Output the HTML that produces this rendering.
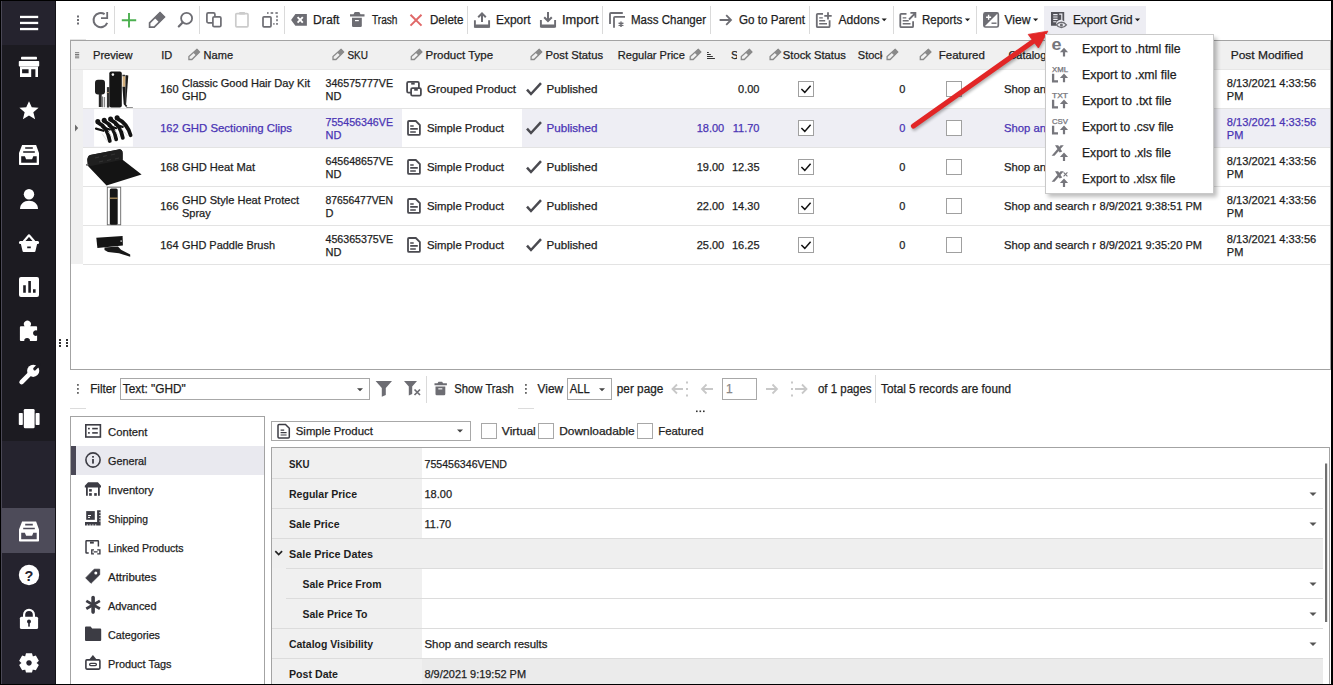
<!DOCTYPE html>
<html><head><meta charset="utf-8"><title>Store Manager</title>
<style>html,body{margin:0;padding:0;width:1333px;height:685px;overflow:hidden;background:#000}</style>
</head><body>
<svg width="1333" height="685" viewBox="0 0 1333 685" font-family="Liberation Sans, sans-serif" style="position:absolute;left:0;top:0"><rect x="0" y="0" width="1333" height="685" fill="#000" />
<rect x="1" y="1" width="1" height="683" fill="#4a4856" />
<rect x="2" y="1" width="54" height="683" fill="#1c1b21" />
<rect x="2" y="1" width="54" height="44" fill="#25232e" />
<rect x="2" y="441" width="54" height="243" fill="#25232e" />
<rect x="2" y="508" width="54" height="45" fill="#4d4b59" />
<rect x="55" y="1" width="1" height="683" fill="#141318" />
<g fill="#fff">
  <rect x="20" y="15.8" width="18.2" height="2.3"/>
  <rect x="20" y="21.8" width="18.2" height="2.3"/>
  <rect x="20" y="27.9" width="18.2" height="2.3"/>
  <rect x="21" y="56.8" width="16" height="2.8" rx="0.8"/>
  <path d="M19.6 61h18.8a0.8 0.8 0 0 1 0.8 0.8v4a0.8 0.8 0 0 1 -0.8 0.8h-18.8a0.8 0.8 0 0 1 -0.8 -0.8v-4a0.8 0.8 0 0 1 0.8 -0.8z"/>
  <path fill-rule="evenodd" d="M20 66.6h18v10.4h-2.6v-7.7h-4.2v7.7h-11.2zM22.1 69.3v3.9h6.5v-3.9z"/>
  <path d="M29 101.2l2.75 6.1 6.85 0.55-5.25 4.45 1.75 6.85-6.1-3.75-6.1 3.75 1.75-6.85-5.25-4.45 6.85-0.55z"/>
  <circle cx="29" cy="194.3" r="5.2"/>
  <path d="M20 209c0-5 4-8.2 9-8.2s9 3.2 9 8.2z"/>
  <path fill-rule="evenodd" d="M21 277h16a2 2 0 0 1 2 2v16a2 2 0 0 1 -2 2h-16a2 2 0 0 1 -2 -2v-16a2 2 0 0 1 2 -2zM23.2 285.2v7.6h2.6v-7.6zM28.3 281v11.8h2.6v-11.8zM33 289.2v3.6h2.6v-3.6z"/>
  <path fill-rule="evenodd" d="M24.6 326.2a3.5 3.5 0 1 1 5.6 0h5.9a1 1 0 0 1 1 1v3.4a2.8 2.8 0 1 0 0 5v4.4a1 1 0 0 1 -1 1h-6.3a2.9 2.2 0 1 0 -5.4 0h-3.5a1 1 0 0 1 -1 -1v-12.8a1 1 0 0 1 1 -1z"/>
  <rect x="23.8" y="409" width="10.8" height="19.2" rx="1.3"/>
  <rect x="18.8" y="413" width="4" height="12" rx="0.8"/>
  <rect x="35.6" y="413" width="4" height="12" rx="0.8"/>
  <circle cx="29" cy="575" r="10.2"/>
  <rect x="19.9" y="616.7" width="18.2" height="12.3" rx="1.6"/>
  <path fill-rule="evenodd" d="M25.10 656.61 L26.00 653.26 L32.00 653.26 L32.90 656.61 L32.50 656.38 L35.85 655.48 L38.85 660.68 L36.40 663.13 L36.40 662.67 L38.85 665.12 L35.85 670.32 L32.50 669.42 L32.90 669.19 L32.00 672.54 L26.00 672.54 L25.10 669.19 L25.50 669.42 L22.15 670.32 L19.15 665.12 L21.60 662.67 L21.60 663.13 L19.15 660.68 L22.15 655.48 L25.50 656.38ZM29 660.15a2.75 2.75 0 1 0 0.01 0z"/>
 </g>
 <path fill="#fff" fill-rule="evenodd" d="M22.1 145L36.1 145L39 153L39 164.2Q39 165 38.2 165L19.8 165Q19 165 19 164.2L19 153Z M25.2 147.2h7.6v1.6h-7.6z M23.2 151.2h11.6v1.5h-11.6z M21.2 156.2h3.7l1.2 3h6l1.2-3h3.4v6.5h-15.5z"/>
 <path fill="#fff" fill-rule="evenodd" d="M22.1 521.6L36.1 521.6L39 529.6L39 540.8Q39 541.6 38.2 541.6L19.8 541.6Q19 541.6 19 540.8L19 529.6Z M25.2 523.8h7.6v1.6h-7.6z M23.2 527.8h11.6v1.5h-11.6z M21.2 532.8h3.7l1.2 3h6l1.2-3h3.4v6.5h-15.5z"/>
 <path d="M23.6 241.5l5.4-6.2 5.4 6.2" fill="none" stroke="#fff" stroke-width="2.1" stroke-linejoin="round"/>
 <path fill="#fff" fill-rule="evenodd" d="M20.4 241h17.2a1.2 1.2 0 0 1 0 3h-0.5l-1.7 7.2a1 1 0 0 1 -1 0.8h-10.8a1 1 0 0 1 -1 -0.8l-1.7-7.2h-0.5a1.2 1.2 0 0 1 0 -3zM27.2 246.6v1.6h3.6v-1.6z"/>
 <circle cx="33.2" cy="370.8" r="6.1" fill="#fff"/>
 <path d="M21.6 382.1L30 373.7" stroke="#fff" stroke-width="4.6" stroke-linecap="round"/>
 <path d="M39 364.6L34.7 368.9" stroke="#1c1b21" stroke-width="3" stroke-linecap="round"/>
 <text x="29" y="580.6" text-anchor="middle" font-family="Liberation Sans" font-weight="bold" font-size="14.5" fill="#25232e">?</text>
 <path d="M24.1 617v-2.2a4.9 4.9 0 0 1 9.8 0v2.2" fill="none" stroke="#fff" stroke-width="2.2"/>
 <circle cx="29" cy="621.6" r="2" fill="#25232e"/>
 <rect x="28.2" y="622" width="1.6" height="4.6" fill="#25232e"/>
<rect x="56" y="1" width="1275" height="683" fill="#fff" />
<rect x="114" y="6" width="1" height="28" fill="#dadada"/>
<rect x="199" y="6" width="1" height="28" fill="#dadada"/>
<rect x="284" y="6" width="1" height="28" fill="#dadada"/>
<rect x="467" y="6" width="1" height="28" fill="#dadada"/>
<rect x="602" y="6" width="1" height="28" fill="#dadada"/>
<rect x="710" y="6" width="1" height="28" fill="#dadada"/>
<rect x="809" y="6" width="1" height="28" fill="#dadada"/>
<rect x="893" y="6" width="1" height="28" fill="#dadada"/>
<rect x="976" y="6" width="1" height="28" fill="#dadada"/>
<rect x="1044" y="6" width="102" height="28" fill="#ededf3" />
<text x="313" y="23.9" font-size="12" fill="#1e1e1e" stroke="#1e1e1e" stroke-width="0.25" textLength="26.5" lengthAdjust="spacingAndGlyphs" >Draft</text>
<text x="372" y="23.9" font-size="12" fill="#1e1e1e" stroke="#1e1e1e" stroke-width="0.25" textLength="25.5" lengthAdjust="spacingAndGlyphs" >Trash</text>
<text x="430" y="23.9" font-size="12" fill="#1e1e1e" stroke="#1e1e1e" stroke-width="0.25" textLength="33.5" lengthAdjust="spacingAndGlyphs" >Delete</text>
<text x="496" y="23.9" font-size="12" fill="#1e1e1e" stroke="#1e1e1e" stroke-width="0.25" textLength="34.5" lengthAdjust="spacingAndGlyphs" >Export</text>
<text x="562" y="23.9" font-size="12" fill="#1e1e1e" stroke="#1e1e1e" stroke-width="0.25" textLength="36.5" lengthAdjust="spacingAndGlyphs" >Import</text>
<text x="631" y="23.9" font-size="12" fill="#1e1e1e" stroke="#1e1e1e" stroke-width="0.25" textLength="75" lengthAdjust="spacingAndGlyphs" >Mass Changer</text>
<text x="739" y="23.9" font-size="12" fill="#1e1e1e" stroke="#1e1e1e" stroke-width="0.25" textLength="66" lengthAdjust="spacingAndGlyphs" >Go to Parent</text>
<text x="838.5" y="23.9" font-size="12" fill="#1e1e1e" stroke="#1e1e1e" stroke-width="0.25" textLength="41" lengthAdjust="spacingAndGlyphs" >Addons</text>
<text x="922" y="23.9" font-size="12" fill="#1e1e1e" stroke="#1e1e1e" stroke-width="0.25" textLength="40.3" lengthAdjust="spacingAndGlyphs" >Reports</text>
<text x="1004.5" y="23.9" font-size="12" fill="#1e1e1e" stroke="#1e1e1e" stroke-width="0.25" textLength="26" lengthAdjust="spacingAndGlyphs" >View</text>
<text x="1073" y="23.9" font-size="12" fill="#1e1e1e" stroke="#1e1e1e" stroke-width="0.25" textLength="59.6" lengthAdjust="spacingAndGlyphs" >Export Grid</text>
<path d="M881.6 18.4h5.2l-2.6 2.8z" fill="#1e1e1e"/>
<path d="M964.9 18.4h5.2l-2.6 2.8z" fill="#1e1e1e"/>
<path d="M1033.0 18.4h5.2l-2.6 2.8z" fill="#1e1e1e"/>
<path d="M1134.9 18.4h5.2l-2.6 2.8z" fill="#1e1e1e"/>

<g fill="#6d6d73">
 <rect x="77" y="15.5" width="2" height="2"/><rect x="77" y="19" width="2" height="2"/><rect x="77" y="22.5" width="2" height="2"/>
</g>
<path d="M107.2 22.8A7.1 7.1 0 1 1 104.6 14.2" fill="none" stroke="#6d6d73" stroke-width="2"/>
<path d="M101 17.2h5.3v-5.2h1.8v7h-7.1z" fill="#6d6d73"/>
<path d="M129 13v14.5M121.8 20.2h14.4" stroke="#4cb050" stroke-width="1.9" fill="none"/>
<path d="M160 12.6L164.4 17L154.2 27.2H149.6V22.8Z" fill="none" stroke="#6d6d73" stroke-width="1.7" stroke-linejoin="miter"/>
<path d="M160 12.1L164.8 16.9L159.25 22.45L154.45 17.65Z" fill="#6d6d73"/>
<circle cx="186.6" cy="18.3" r="5.5" fill="none" stroke="#6d6d73" stroke-width="1.8"/>
<path d="M182.6 22.4L178.8 26.4" stroke="#6d6d73" stroke-width="2.2" stroke-linecap="round"/>
<rect x="206.9" y="12.9" width="8" height="9.9" rx="1.3" fill="none" stroke="#6d6d73" stroke-width="1.7"/>
<rect x="212.9" y="16.8" width="8" height="9.9" rx="1.3" fill="#fff" stroke="#6d6d73" stroke-width="1.7"/>
<rect x="235.8" y="13.6" width="12.2" height="13.2" rx="1" fill="none" stroke="#cbcbcb" stroke-width="1.7"/>
<rect x="239.3" y="12" width="5.6" height="2.6" fill="#cbcbcb"/>
<rect x="263" y="16.8" width="8" height="10" rx="1" fill="none" stroke="#6d6d73" stroke-width="1.7"/>
<g fill="#6d6d73"><rect x="267" y="12.2" width="1.6" height="1.6"/><rect x="270.6" y="12.2" width="2.6" height="1.6"/><rect x="275.4" y="12.2" width="2.4" height="1.6"/><rect x="276.2" y="15.6" width="1.6" height="2"/><rect x="276.2" y="19.2" width="1.6" height="2"/><rect x="276.2" y="23" width="1.6" height="1.8"/><rect x="273.3" y="23" width="1.2" height="1.8"/></g>
<path d="M295.4 14h11.5v11.8h-11.5l-4.3-5.9z" fill="#6d6d73"/>
<path d="M297.6 17.2l5.2 5.4M302.8 17.2l-5.2 5.4" stroke="#fff" stroke-width="1.9"/>
<path d="M353.5 14.3l1.2-2.2h4.6l1.2 2.2h4v2.3h-14.5v-2.3z" fill="#6d6d73"/>
<path d="M352 17.8h9.8v7.9a1.2 1.2 0 0 1 -1.2 1.2h-7.4a1.2 1.2 0 0 1 -1.2 -1.2z" fill="#6d6d73"/>
<rect x="355" y="20" width="3.8" height="1.2" fill="#fff"/>
<path d="M410.5 14.8l11 10.8M421.5 14.8l-11 10.8" stroke="#e06868" stroke-width="2"/>
<path d="M474.9 20.3v6.6h14.2v-6.6" fill="none" stroke="#6d6d73" stroke-width="1.9"/>
<rect x="474.9" y="24.6" width="14.2" height="3.2" rx="0.8" fill="#6d6d73"/>
<path d="M482 22v-8.4M478.2 17.2l3.8-3.8 3.8 3.8" fill="none" stroke="#6d6d73" stroke-width="2"/>
<path d="M540.9 20v6.6h14.2v-6.6" fill="none" stroke="#6d6d73" stroke-width="1.9"/>
<rect x="540.9" y="24.6" width="14.2" height="3.2" rx="0.8" fill="#6d6d73"/>
<path d="M548 12v8.6M544.2 17.2l3.8 3.8 3.8-3.8" fill="none" stroke="#6d6d73" stroke-width="2"/>
<path d="M610 24v-10a1 1 0 0 1 1 -1h11.8" fill="none" stroke="#6d6d73" stroke-width="1.8"/>
<path d="M614 27.8v-10a1 1 0 0 1 1 -1h10" fill="none" stroke="#6d6d73" stroke-width="1.8"/>
<path d="M621 21.4v5.6M618.6 22.8l4.8 2.8M618.6 25.6l4.8-2.8" stroke="#6d6d73" stroke-width="1.5"/>
<path d="M719.6 20h10.2M726.2 15.2l4.8 4.8-4.8 4.8" fill="none" stroke="#6d6d73" stroke-width="1.8"/>
<path d="M823 13.8h-5.2a1 1 0 0 0 -1 1v11.4a1 1 0 0 0 1 1h10.8a1 1 0 0 0 1 -1v-6" fill="none" stroke="#6d6d73" stroke-width="1.8"/>
<path d="M819.2 17.9h3.6M819.2 20.8h6M819.2 23.7h7.8" stroke="#6d6d73" stroke-width="1.4"/>
<path d="M828 12.2v7.4M824.3 15.9h7.4" stroke="#6d6d73" stroke-width="1.8"/>
<path d="M906.5 13.8h-5.2a1 1 0 0 0 -1 1v11.4a1 1 0 0 0 1 1h10.8a1 1 0 0 0 1 -1v-5" fill="none" stroke="#6d6d73" stroke-width="1.8"/>
<path d="M902.7 17.9h3.6M902.7 20.8h6M902.7 23.7h7.8" stroke="#6d6d73" stroke-width="1.4"/>
<path d="M909 19.5l5.6-5.6M910.4 12.8h5v5" fill="none" stroke="#6d6d73" stroke-width="1.8"/>
<rect x="983.9" y="12.8" width="14.4" height="14.2" rx="1.6" fill="none" stroke="#6d6d73" stroke-width="1.7"/>
<path d="M984 12.8h14.3L984 27z" fill="#6d6d73"/>
<path d="M988.6 14.8v5M986.1 17.3h5" stroke="#fff" stroke-width="1.4"/>
<path d="M991.5 23.2h5" stroke="#6d6d73" stroke-width="1.4"/>
<path d="M1051 12h13.2v9.5a4.6 4.6 0 0 0 -7.9 4.3h-5.3z" fill="#55555c"/>
<path d="M1053.2 14.6h4.4M1053.2 17h4.4M1053.2 19.4h4.4M1053.2 21.8h3.2" stroke="#ededf3" stroke-width="1.1"/>
<path d="M1059.2 14.2h2.6v6" fill="none" stroke="#ededf3" stroke-width="1.2"/>
<path d="M1056.4 24.9c2.7-3.5 7.3-3.5 10 0c-2.7 3.5-7.3 3.5-10 0z" fill="none" stroke="#6d6d73" stroke-width="1.4"/>
<circle cx="1061.4" cy="24.9" r="1.5" fill="#6d6d73"/>

<rect x="70" y="39" width="16" height="1" fill="#e4e4e4"/>
<rect x="70" y="40" width="1261" height="330" fill="#a3a3a3" />
<rect x="71" y="41" width="1259" height="328" fill="#fff" />
<rect x="71" y="41" width="1259" height="28" fill="#f0f0f0" />
<rect x="71" y="69" width="1259" height="1" fill="#e6e6e6"/>
<rect x="71" y="70" width="12" height="194" fill="#f0f0f0" />
<rect x="83" y="108" width="1247" height="1" fill="#e3e3e3"/>
<text x="178.5" y="92.8" font-size="11" fill="#1e1e1e" stroke="#1e1e1e" stroke-width="0.25" text-anchor="end" >160</text>
<text x="182" y="86.8" font-size="11" fill="#1e1e1e" stroke="#1e1e1e" stroke-width="0.25" textLength="128" lengthAdjust="spacingAndGlyphs" >Classic Good Hair Day Kit</text>
<text x="182" y="99.7" font-size="11" fill="#1e1e1e" stroke="#1e1e1e" stroke-width="0.25" >GHD</text>
<text x="325.5" y="86.8" font-size="11" fill="#1e1e1e" stroke="#1e1e1e" stroke-width="0.25" textLength="67.5" lengthAdjust="spacingAndGlyphs" >346575777VE</text>
<text x="325.5" y="99.7" font-size="11" fill="#1e1e1e" stroke="#1e1e1e" stroke-width="0.25" >ND</text>
<text x="427" y="92.8" font-size="11" fill="#1e1e1e" stroke="#1e1e1e" stroke-width="0.25" textLength="89" lengthAdjust="spacingAndGlyphs" >Grouped Product</text>
<text x="546.5" y="92.8" font-size="11" fill="#1e1e1e" stroke="#1e1e1e" stroke-width="0.25" textLength="51" lengthAdjust="spacingAndGlyphs" >Published</text>
<text x="759.5" y="92.8" font-size="11" fill="#1e1e1e" stroke="#1e1e1e" stroke-width="0.25" text-anchor="end" >0.00</text>
<text x="905.3" y="92.8" font-size="11" fill="#1e1e1e" stroke="#1e1e1e" stroke-width="0.25" text-anchor="end" >0</text>
<text x="1004" y="92.8" font-size="11" fill="#1e1e1e" stroke="#1e1e1e" stroke-width="0.25" textLength="92" lengthAdjust="spacingAndGlyphs" clip-path="url(#clipcat)">Shop and search r</text>
<text x="1226.8" y="86.8" font-size="11" fill="#1e1e1e" stroke="#1e1e1e" stroke-width="0.25" textLength="89.5" lengthAdjust="spacingAndGlyphs" >8/13/2021 4:33:56</text>
<text x="1226.8" y="99.7" font-size="11" fill="#1e1e1e" stroke="#1e1e1e" stroke-width="0.25" >PM</text>
<rect x="798.5" y="81.5" width="15" height="15" fill="#fff" stroke="#a0a0a0"/>
<path d="M801.4 89l3.4 3.4 5.8-6.6" fill="none" stroke="#111" stroke-width="1.5"/>
<rect x="946.5" y="81.5" width="15" height="15" fill="#fff" stroke="#a0a0a0"/>
<rect x="407.1" y="81.9" width="11.8" height="10.8" rx="1.4" fill="none" stroke="#4a4a50" stroke-width="1.8"/>
<rect x="411.2" y="82.5" width="3.5" height="2.1" fill="#4a4a50"/>
<rect x="411.1" y="88.2" width="9.8" height="7.5" rx="1.4" fill="#fff" stroke="#4a4a50" stroke-width="1.8"/>
<rect x="414.2" y="88.6" width="3.6" height="2.1" fill="#4a4a50"/>
<path d="M527 89.6l4 4.4 10-10.8" fill="none" stroke="#4a4a50" stroke-width="2.5"/>
<rect x="83" y="109" width="1247" height="38" fill="#eeeef4" />
<rect x="402" y="109" width="120" height="38" fill="#fff" />
<path d="M75 124.5l3.2 3.5-3.2 3.5z" fill="#6a6a6a"/>
<rect x="83" y="147" width="1247" height="1" fill="#e3e3e3"/>
<text x="178.5" y="131.8" font-size="11" fill="#4a34b4" stroke="#4a34b4" stroke-width="0.25" text-anchor="end" >162</text>
<text x="182" y="131.8" font-size="11" fill="#4a34b4" stroke="#4a34b4" stroke-width="0.25" textLength="110" lengthAdjust="spacingAndGlyphs" >GHD Sectioning Clips</text>
<text x="325.5" y="125.8" font-size="11" fill="#4a34b4" stroke="#4a34b4" stroke-width="0.25" textLength="67.5" lengthAdjust="spacingAndGlyphs" >755456346VE</text>
<text x="325.5" y="138.7" font-size="11" fill="#4a34b4" stroke="#4a34b4" stroke-width="0.25" >ND</text>
<text x="427" y="131.8" font-size="11" fill="#1e1e1e" stroke="#1e1e1e" stroke-width="0.25" textLength="77" lengthAdjust="spacingAndGlyphs" >Simple Product</text>
<text x="546.5" y="131.8" font-size="11" fill="#4a34b4" stroke="#4a34b4" stroke-width="0.25" textLength="51" lengthAdjust="spacingAndGlyphs" >Published</text>
<text x="724.2" y="131.8" font-size="11" fill="#4a34b4" stroke="#4a34b4" stroke-width="0.25" text-anchor="end" >18.00</text>
<text x="759.5" y="131.8" font-size="11" fill="#4a34b4" stroke="#4a34b4" stroke-width="0.25" text-anchor="end" >11.70</text>
<text x="905.3" y="131.8" font-size="11" fill="#4a34b4" stroke="#4a34b4" stroke-width="0.25" text-anchor="end" >0</text>
<text x="1004" y="131.8" font-size="11" fill="#4a34b4" stroke="#4a34b4" stroke-width="0.25" textLength="92" lengthAdjust="spacingAndGlyphs" clip-path="url(#clipcat)">Shop and search r</text>
<text x="1226.8" y="125.8" font-size="11" fill="#4a34b4" stroke="#4a34b4" stroke-width="0.25" textLength="89.5" lengthAdjust="spacingAndGlyphs" >8/13/2021 4:33:56</text>
<text x="1226.8" y="138.7" font-size="11" fill="#4a34b4" stroke="#4a34b4" stroke-width="0.25" >PM</text>
<rect x="798.5" y="120.5" width="15" height="15" fill="#fff" stroke="#a0a0a0"/>
<path d="M801.4 128l3.4 3.4 5.8-6.6" fill="none" stroke="#111" stroke-width="1.5"/>
<rect x="946.5" y="120.5" width="15" height="15" fill="#fff" stroke="#a0a0a0"/>
<path d="M408 122a1 1 0 0 1 1-1h6.8l4.1 4.1v8.8a1 1 0 0 1 -1 1h-9.9a1 1 0 0 1 -1 -1z" fill="none" stroke="#4a4a50" stroke-width="1.8"/>
<path d="M410.2 126h3.5M410.2 128.9h7.6M410.2 132h5.6" stroke="#4a4a50" stroke-width="1.6"/>
<path d="M527 128.6l4 4.4 10-10.8" fill="none" stroke="#4a4a50" stroke-width="2.5"/>
<rect x="83" y="186" width="1247" height="1" fill="#e3e3e3"/>
<text x="178.5" y="170.8" font-size="11" fill="#1e1e1e" stroke="#1e1e1e" stroke-width="0.25" text-anchor="end" >168</text>
<text x="182" y="170.8" font-size="11" fill="#1e1e1e" stroke="#1e1e1e" stroke-width="0.25" textLength="73" lengthAdjust="spacingAndGlyphs" >GHD Heat Mat</text>
<text x="325.5" y="164.8" font-size="11" fill="#1e1e1e" stroke="#1e1e1e" stroke-width="0.25" textLength="67.5" lengthAdjust="spacingAndGlyphs" >645648657VE</text>
<text x="325.5" y="177.7" font-size="11" fill="#1e1e1e" stroke="#1e1e1e" stroke-width="0.25" >ND</text>
<text x="427" y="170.8" font-size="11" fill="#1e1e1e" stroke="#1e1e1e" stroke-width="0.25" textLength="77" lengthAdjust="spacingAndGlyphs" >Simple Product</text>
<text x="546.5" y="170.8" font-size="11" fill="#1e1e1e" stroke="#1e1e1e" stroke-width="0.25" textLength="51" lengthAdjust="spacingAndGlyphs" >Published</text>
<text x="724.2" y="170.8" font-size="11" fill="#1e1e1e" stroke="#1e1e1e" stroke-width="0.25" text-anchor="end" >19.00</text>
<text x="759.5" y="170.8" font-size="11" fill="#1e1e1e" stroke="#1e1e1e" stroke-width="0.25" text-anchor="end" >12.35</text>
<text x="905.3" y="170.8" font-size="11" fill="#1e1e1e" stroke="#1e1e1e" stroke-width="0.25" text-anchor="end" >0</text>
<text x="1004" y="170.8" font-size="11" fill="#1e1e1e" stroke="#1e1e1e" stroke-width="0.25" textLength="92" lengthAdjust="spacingAndGlyphs" clip-path="url(#clipcat)">Shop and search r</text>
<text x="1226.8" y="164.8" font-size="11" fill="#1e1e1e" stroke="#1e1e1e" stroke-width="0.25" textLength="89.5" lengthAdjust="spacingAndGlyphs" >8/13/2021 4:33:56</text>
<text x="1226.8" y="177.7" font-size="11" fill="#1e1e1e" stroke="#1e1e1e" stroke-width="0.25" >PM</text>
<rect x="798.5" y="159.5" width="15" height="15" fill="#fff" stroke="#a0a0a0"/>
<path d="M801.4 167l3.4 3.4 5.8-6.6" fill="none" stroke="#111" stroke-width="1.5"/>
<rect x="946.5" y="159.5" width="15" height="15" fill="#fff" stroke="#a0a0a0"/>
<path d="M408 161a1 1 0 0 1 1-1h6.8l4.1 4.1v8.8a1 1 0 0 1 -1 1h-9.9a1 1 0 0 1 -1 -1z" fill="none" stroke="#4a4a50" stroke-width="1.8"/>
<path d="M410.2 165h3.5M410.2 167.9h7.6M410.2 171h5.6" stroke="#4a4a50" stroke-width="1.6"/>
<path d="M527 167.6l4 4.4 10-10.8" fill="none" stroke="#4a4a50" stroke-width="2.5"/>
<rect x="83" y="225" width="1247" height="1" fill="#e3e3e3"/>
<text x="178.5" y="209.8" font-size="11" fill="#1e1e1e" stroke="#1e1e1e" stroke-width="0.25" text-anchor="end" >166</text>
<text x="182" y="203.8" font-size="11" fill="#1e1e1e" stroke="#1e1e1e" stroke-width="0.25" textLength="117" lengthAdjust="spacingAndGlyphs" >GHD Style Heat Protect</text>
<text x="182" y="216.7" font-size="11" fill="#1e1e1e" stroke="#1e1e1e" stroke-width="0.25" >Spray</text>
<text x="325.5" y="203.8" font-size="11" fill="#1e1e1e" stroke="#1e1e1e" stroke-width="0.25" textLength="67.5" lengthAdjust="spacingAndGlyphs" >87656477VEN</text>
<text x="325.5" y="216.7" font-size="11" fill="#1e1e1e" stroke="#1e1e1e" stroke-width="0.25" >D</text>
<text x="427" y="209.8" font-size="11" fill="#1e1e1e" stroke="#1e1e1e" stroke-width="0.25" textLength="77" lengthAdjust="spacingAndGlyphs" >Simple Product</text>
<text x="546.5" y="209.8" font-size="11" fill="#1e1e1e" stroke="#1e1e1e" stroke-width="0.25" textLength="51" lengthAdjust="spacingAndGlyphs" >Published</text>
<text x="724.2" y="209.8" font-size="11" fill="#1e1e1e" stroke="#1e1e1e" stroke-width="0.25" text-anchor="end" >22.00</text>
<text x="759.5" y="209.8" font-size="11" fill="#1e1e1e" stroke="#1e1e1e" stroke-width="0.25" text-anchor="end" >14.30</text>
<text x="905.3" y="209.8" font-size="11" fill="#1e1e1e" stroke="#1e1e1e" stroke-width="0.25" text-anchor="end" >0</text>
<text x="1004" y="209.8" font-size="11" fill="#1e1e1e" stroke="#1e1e1e" stroke-width="0.25" textLength="92" lengthAdjust="spacingAndGlyphs" clip-path="url(#clipcat)">Shop and search r</text>
<text x="1099.5" y="209.8" font-size="11" fill="#1e1e1e" stroke="#1e1e1e" stroke-width="0.25" textLength="102.5" lengthAdjust="spacingAndGlyphs" >8/9/2021 9:38:51 PM</text>
<text x="1226.8" y="203.8" font-size="11" fill="#1e1e1e" stroke="#1e1e1e" stroke-width="0.25" textLength="89.5" lengthAdjust="spacingAndGlyphs" >8/13/2021 4:33:56</text>
<text x="1226.8" y="216.7" font-size="11" fill="#1e1e1e" stroke="#1e1e1e" stroke-width="0.25" >PM</text>
<rect x="798.5" y="198.5" width="15" height="15" fill="#fff" stroke="#a0a0a0"/>
<path d="M801.4 206l3.4 3.4 5.8-6.6" fill="none" stroke="#111" stroke-width="1.5"/>
<rect x="946.5" y="198.5" width="15" height="15" fill="#fff" stroke="#a0a0a0"/>
<path d="M408 200a1 1 0 0 1 1-1h6.8l4.1 4.1v8.8a1 1 0 0 1 -1 1h-9.9a1 1 0 0 1 -1 -1z" fill="none" stroke="#4a4a50" stroke-width="1.8"/>
<path d="M410.2 204h3.5M410.2 206.9h7.6M410.2 210h5.6" stroke="#4a4a50" stroke-width="1.6"/>
<path d="M527 206.6l4 4.4 10-10.8" fill="none" stroke="#4a4a50" stroke-width="2.5"/>
<rect x="83" y="264" width="1247" height="1" fill="#e3e3e3"/>
<text x="178.5" y="248.8" font-size="11" fill="#1e1e1e" stroke="#1e1e1e" stroke-width="0.25" text-anchor="end" >164</text>
<text x="182" y="248.8" font-size="11" fill="#1e1e1e" stroke="#1e1e1e" stroke-width="0.25" textLength="93" lengthAdjust="spacingAndGlyphs" >GHD Paddle Brush</text>
<text x="325.5" y="242.8" font-size="11" fill="#1e1e1e" stroke="#1e1e1e" stroke-width="0.25" textLength="67.5" lengthAdjust="spacingAndGlyphs" >456365375VE</text>
<text x="325.5" y="255.7" font-size="11" fill="#1e1e1e" stroke="#1e1e1e" stroke-width="0.25" >ND</text>
<text x="427" y="248.8" font-size="11" fill="#1e1e1e" stroke="#1e1e1e" stroke-width="0.25" textLength="77" lengthAdjust="spacingAndGlyphs" >Simple Product</text>
<text x="546.5" y="248.8" font-size="11" fill="#1e1e1e" stroke="#1e1e1e" stroke-width="0.25" textLength="51" lengthAdjust="spacingAndGlyphs" >Published</text>
<text x="724.2" y="248.8" font-size="11" fill="#1e1e1e" stroke="#1e1e1e" stroke-width="0.25" text-anchor="end" >25.00</text>
<text x="759.5" y="248.8" font-size="11" fill="#1e1e1e" stroke="#1e1e1e" stroke-width="0.25" text-anchor="end" >16.25</text>
<text x="905.3" y="248.8" font-size="11" fill="#1e1e1e" stroke="#1e1e1e" stroke-width="0.25" text-anchor="end" >0</text>
<text x="1004" y="248.8" font-size="11" fill="#1e1e1e" stroke="#1e1e1e" stroke-width="0.25" textLength="92" lengthAdjust="spacingAndGlyphs" clip-path="url(#clipcat)">Shop and search r</text>
<text x="1099.5" y="248.8" font-size="11" fill="#1e1e1e" stroke="#1e1e1e" stroke-width="0.25" textLength="102.5" lengthAdjust="spacingAndGlyphs" >8/9/2021 9:35:20 PM</text>
<text x="1226.8" y="242.8" font-size="11" fill="#1e1e1e" stroke="#1e1e1e" stroke-width="0.25" textLength="89.5" lengthAdjust="spacingAndGlyphs" >8/13/2021 4:33:56</text>
<text x="1226.8" y="255.7" font-size="11" fill="#1e1e1e" stroke="#1e1e1e" stroke-width="0.25" >PM</text>
<rect x="798.5" y="237.5" width="15" height="15" fill="#fff" stroke="#a0a0a0"/>
<path d="M801.4 245l3.4 3.4 5.8-6.6" fill="none" stroke="#111" stroke-width="1.5"/>
<rect x="946.5" y="237.5" width="15" height="15" fill="#fff" stroke="#a0a0a0"/>
<path d="M408 239a1 1 0 0 1 1-1h6.8l4.1 4.1v8.8a1 1 0 0 1 -1 1h-9.9a1 1 0 0 1 -1 -1z" fill="none" stroke="#4a4a50" stroke-width="1.8"/>
<path d="M410.2 243h3.5M410.2 245.9h7.6M410.2 249h5.6" stroke="#4a4a50" stroke-width="1.6"/>
<path d="M527 245.6l4 4.4 10-10.8" fill="none" stroke="#4a4a50" stroke-width="2.5"/>
<defs><clipPath id="clipcat"><rect x="1000" y="60" width="96" height="220"/></clipPath><clipPath id="clipS"><rect x="725" y="41" width="12" height="28"/></clipPath><clipPath id="clipStock"><rect x="850" y="41" width="32.3" height="28"/></clipPath></defs>
<g fill="#777"><rect x="75" y="52.2" width="4.2" height="1"/><rect x="75" y="54" width="4.2" height="1"/><rect x="75" y="55.6" width="4.2" height="1"/><rect x="75" y="57.3" width="4.2" height="1"/></g>
<text x="93" y="58.8" font-size="11" fill="#1e1e1e" stroke="#1e1e1e" stroke-width="0.25" textLength="39.5" lengthAdjust="spacingAndGlyphs" >Preview</text>
<text x="161.2" y="58.8" font-size="11" fill="#1e1e1e" stroke="#1e1e1e" stroke-width="0.25" >ID</text>
<text x="203.6" y="58.8" font-size="11" fill="#1e1e1e" stroke="#1e1e1e" stroke-width="0.25" textLength="29.5" lengthAdjust="spacingAndGlyphs" >Name</text>
<text x="347.4" y="58.8" font-size="11" fill="#1e1e1e" stroke="#1e1e1e" stroke-width="0.25" textLength="20.5" lengthAdjust="spacingAndGlyphs" >SKU</text>
<text x="425.6" y="58.8" font-size="11" fill="#1e1e1e" stroke="#1e1e1e" stroke-width="0.25" textLength="67.5" lengthAdjust="spacingAndGlyphs" >Product Type</text>
<text x="545.6" y="58.8" font-size="11" fill="#1e1e1e" stroke="#1e1e1e" stroke-width="0.25" textLength="57.5" lengthAdjust="spacingAndGlyphs" >Post Status</text>
<text x="617.8" y="58.8" font-size="11" fill="#1e1e1e" stroke="#1e1e1e" stroke-width="0.25" textLength="67" lengthAdjust="spacingAndGlyphs" >Regular Price</text>
<text x="782.8" y="58.8" font-size="11" fill="#1e1e1e" stroke="#1e1e1e" stroke-width="0.25" textLength="63" lengthAdjust="spacingAndGlyphs" >Stock Status</text>
<text x="938.8" y="58.8" font-size="11" fill="#1e1e1e" stroke="#1e1e1e" stroke-width="0.25" textLength="46" lengthAdjust="spacingAndGlyphs" >Featured</text>
<text x="1008.4" y="58.8" font-size="11" fill="#1e1e1e" stroke="#1e1e1e" stroke-width="0.25" >Catalog</text>
<text x="1230.7" y="58.8" font-size="11" fill="#1e1e1e" stroke="#1e1e1e" stroke-width="0.25" textLength="72.5" lengthAdjust="spacingAndGlyphs" >Post Modified</text>
<text x="731" y="58.8" font-size="11" fill="#1e1e1e" stroke="#1e1e1e" stroke-width="0.25" clip-path="url(#clipS)">Sale</text>
<text x="857.8" y="58.8" font-size="11" fill="#1e1e1e" stroke="#1e1e1e" stroke-width="0.25" clip-path="url(#clipStock)">Stock</text>
<path d="M196.9 49.3l2.6 2.6-7.6 7.6h-3v-2.9z" fill="none" stroke="#8a8a8a" stroke-width="1.3"/>
<path d="M196.9 49.1l2.8 2.8-3.6 3.6-2.8-2.8z" fill="#8a8a8a"/>
<path d="M341.0 49.3l2.6 2.6-7.6 7.6h-3v-2.9z" fill="none" stroke="#8a8a8a" stroke-width="1.3"/>
<path d="M341.0 49.1l2.8 2.8-3.6 3.6-2.8-2.8z" fill="#8a8a8a"/>
<path d="M419.3 49.3l2.6 2.6-7.6 7.6h-3v-2.9z" fill="none" stroke="#8a8a8a" stroke-width="1.3"/>
<path d="M419.3 49.1l2.8 2.8-3.6 3.6-2.8-2.8z" fill="#8a8a8a"/>
<path d="M539.0999999999999 49.3l2.6 2.6-7.6 7.6h-3v-2.9z" fill="none" stroke="#8a8a8a" stroke-width="1.3"/>
<path d="M539.0999999999999 49.1l2.8 2.8-3.6 3.6-2.8-2.8z" fill="#8a8a8a"/>
<path d="M698.1999999999999 49.3l2.6 2.6-7.6 7.6h-3v-2.9z" fill="none" stroke="#8a8a8a" stroke-width="1.3"/>
<path d="M698.1999999999999 49.1l2.8 2.8-3.6 3.6-2.8-2.8z" fill="#8a8a8a"/>
<path d="M749.3 49.3l2.6 2.6-7.6 7.6h-3v-2.9z" fill="none" stroke="#8a8a8a" stroke-width="1.3"/>
<path d="M749.3 49.1l2.8 2.8-3.6 3.6-2.8-2.8z" fill="#8a8a8a"/>
<path d="M778.0999999999999 49.3l2.6 2.6-7.6 7.6h-3v-2.9z" fill="none" stroke="#8a8a8a" stroke-width="1.3"/>
<path d="M778.0999999999999 49.1l2.8 2.8-3.6 3.6-2.8-2.8z" fill="#8a8a8a"/>
<path d="M895.0999999999999 49.3l2.6 2.6-7.6 7.6h-3v-2.9z" fill="none" stroke="#8a8a8a" stroke-width="1.3"/>
<path d="M895.0999999999999 49.1l2.8 2.8-3.6 3.6-2.8-2.8z" fill="#8a8a8a"/>
<path d="M928.3 49.3l2.6 2.6-7.6 7.6h-3v-2.9z" fill="none" stroke="#8a8a8a" stroke-width="1.3"/>
<path d="M928.3 49.1l2.8 2.8-3.6 3.6-2.8-2.8z" fill="#8a8a8a"/>
<g fill="#333"><rect x="707" y="52" width="1.8" height="1"/><rect x="707" y="54" width="3.8" height="1"/><rect x="707" y="56" width="5.8" height="1"/><rect x="707" y="58" width="7.9" height="1"/></g>

<g>
 <rect x="95" y="79.8" width="10" height="14.8" rx="3" fill="#1e1e1e"/>
 <rect x="98.8" y="94" width="2.9" height="13" fill="#262626"/>
 <rect x="101.8" y="96.5" width="1.3" height="10.7" fill="#777"/>
 <rect x="103.8" y="97" width="1.3" height="10.2" fill="#888"/>
 <rect x="106.9" y="87.1" width="2.4" height="20.4" fill="#333"/>
 <rect x="106.9" y="92" width="2.4" height="0.9" fill="#a89070"/>
 <rect x="109.3" y="71.6" width="12.5" height="35.9" rx="2" fill="#141414"/>
 <circle cx="112.9" cy="74.6" r="1.3" fill="#eee"/>
 <rect x="122.6" y="76.2" width="2.8" height="10.5" fill="#d4b07c"/>
 <path d="M122.4 74.8h2.5l0.2 1.4h-2.7z" fill="#333"/>
 <path d="M122.4 86.7h3l0.4 17.5 1.5 1.8-1.2 0.8-2.4-2.6z" fill="#1a1a1a"/>
 <path d="M125.5 75l2.8 0.6-2.2 29h-0.8z" fill="#1c1c1c"/>
 <path d="M124.5 105.6l3 1.6h5.4v0.6h-6z" fill="#222"/>
</g>
<rect x="94.1" y="109.2" width="38.8" height="37.3" fill="#fff"/>
<g fill="none" stroke="#121212" stroke-linecap="round">
 <path d="M97.8 122.5Q107.5 127 109.8 141" stroke-width="3.8"/>
 <path d="M104.2 121.1Q113.9 125.6 116.2 139.4" stroke-width="3.8"/>
 <path d="M110.6 119.8Q120.3 124.3 122.8 137.8" stroke-width="3.8"/>
 <path d="M117.1 118.5Q127 123 130.6 135.2" stroke-width="3.8"/>
 <path d="M96 128.6L103.5 130.8M102.4 127.3L109.9 129.5M108.8 126L116.3 128.2M115.2 124.7L122.7 126.9" stroke-width="2.2"/>
</g>
<g fill="#121212"><circle cx="97.8" cy="121.6" r="2.5"/><circle cx="104.2" cy="120.3" r="2.5"/><circle cx="110.6" cy="119" r="2.5"/><circle cx="117.1" cy="117.7" r="2.5"/></g>
<path d="M102 133.5l5.5 8M108.4 131.9l5.5 8M114.8 130.3l5.5 8M121.5 128.6l6 7.5" stroke="#d8d8d8" stroke-width="0.8"/>
<path d="M88 157.6Q88 155.6 90 155.1L118.5 149.4Q122.5 149 122.6 153L122.6 159.8L141.6 174.4L106.5 185.5L87.3 165.2Z" fill="#141414"/>
<path d="M90.5 154.9L118.5 149.4Q122.5 149 122.6 153L122.6 159.8L89.8 166.3Q86.2 161.5 87.4 158Q88.4 155.4 90.5 154.9Z" fill="#1f1f1f"/><path d="M95 158l4 -1M103 156.5l4 -1M111 155l4 -1M99 162l4 -1M107 160.5l4 -1M115 159l4 -1" stroke="#333" stroke-width="1.2"/>
<rect x="86" y="164" width="2.4" height="1.7" fill="#777"/>
<rect x="107.3" y="187.2" width="13.4" height="37.6" fill="#fff" stroke="#666" stroke-width="0.9"/>
<rect x="109.8" y="188.6" width="7.9" height="36.2" rx="1.5" fill="#161616"/>
<rect x="109.8" y="197.6" width="7.9" height="1.2" fill="#b89860"/>
<path d="M96.3 237.7L122.6 235.9L122.9 245.4L97.4 248Z" fill="#141414"/>
<path d="M104.5 247.6L118 246.6L121 249.8L130.2 254.6L130.2 256.8L119 253.2L108 252L104.5 250Z" fill="#181818"/>
<rect x="120.5" y="240.3" width="1.3" height="1.6" fill="#ccc"/>

<defs><filter id="ash" x="-20%" y="-20%" width="140%" height="140%"><feGaussianBlur stdDeviation="1.6"/></filter></defs>
<g opacity="0.3" filter="url(#ash)" transform="translate(1,2)"><path d="M913.5 126L1034.5 40.5" stroke="#000" stroke-width="5.2" stroke-linecap="round"/><path d="M1047.8 31.2L1028.2 34.4L1038.4 48z" fill="#000"/></g>
<path d="M913.5 126L1034.5 40.5" stroke="#e22626" stroke-width="5.2" stroke-linecap="round"/>
<path d="M1047.8 31.2L1028.2 34.4L1038.4 48z" fill="#e22626" stroke="#e22626" stroke-width="0.8" stroke-linejoin="round"/>
<defs><filter id="sh" x="-10%" y="-10%" width="130%" height="130%"><feGaussianBlur stdDeviation="2"/></filter></defs>
<rect x="1048" y="38" width="169" height="159" fill="#000" opacity="0.26" filter="url(#sh)"/>
<rect x="1045" y="34" width="169" height="160" fill="#c9c9c9" />
<rect x="1046" y="35" width="167" height="158" fill="#fff" />
<text x="1082" y="52.9" font-size="12" fill="#1e1e1e" stroke="#1e1e1e" stroke-width="0.25" textLength="98.5" lengthAdjust="spacingAndGlyphs" >Export to .html file</text>
<text x="1082" y="78.9" font-size="12" fill="#1e1e1e" stroke="#1e1e1e" stroke-width="0.25" textLength="94.5" lengthAdjust="spacingAndGlyphs" >Export to .xml file</text>
<text x="1082" y="104.9" font-size="12" fill="#1e1e1e" stroke="#1e1e1e" stroke-width="0.25" textLength="89.5" lengthAdjust="spacingAndGlyphs" >Export to .txt file</text>
<text x="1082" y="130.9" font-size="12" fill="#1e1e1e" stroke="#1e1e1e" stroke-width="0.25" textLength="91.5" lengthAdjust="spacingAndGlyphs" >Export to .csv file</text>
<text x="1082" y="156.9" font-size="12" fill="#1e1e1e" stroke="#1e1e1e" stroke-width="0.25" textLength="89" lengthAdjust="spacingAndGlyphs" >Export to .xls file</text>
<text x="1082" y="182.9" font-size="12" fill="#1e1e1e" stroke="#1e1e1e" stroke-width="0.25" textLength="93.5" lengthAdjust="spacingAndGlyphs" >Export to .xlsx file</text>

<text x="1051.6" y="50.3" font-size="16.5" font-weight="bold" fill="#76767c" textLength="10" lengthAdjust="spacingAndGlyphs">e</text>
<path d="M1064 47.8l4.1 4.5h-3v4.2h-2.2v-4.2h-3z" fill="#76767c"/>
<text x="1052" y="72.2" font-size="6.6" fill="#76767c" stroke="#76767c" stroke-width="0.25" textLength="16" lengthAdjust="spacingAndGlyphs">XML</text><path d="M1053.1 73.8v7.6h4.9" fill="none" stroke="#76767c" stroke-width="2.3"/><path d="M1064 73.6l4.1 4.5h-3v4.2h-2.2v-4.2h-3z" fill="#76767c"/><text x="1052" y="98.2" font-size="6.6" fill="#76767c" stroke="#76767c" stroke-width="0.25" textLength="16" lengthAdjust="spacingAndGlyphs">TXT</text><path d="M1053.1 99.8v7.6h4.9" fill="none" stroke="#76767c" stroke-width="2.3"/><path d="M1064 99.6l4.1 4.5h-3v4.2h-2.2v-4.2h-3z" fill="#76767c"/><text x="1052" y="124.2" font-size="6.6" fill="#76767c" stroke="#76767c" stroke-width="0.25" textLength="16" lengthAdjust="spacingAndGlyphs">CSV</text><path d="M1053.1 125.8v7.6h4.9" fill="none" stroke="#76767c" stroke-width="2.3"/><path d="M1064 125.6l4.1 4.5h-3v4.2h-2.2v-4.2h-3z" fill="#76767c"/>
<path d="M1060.6 145.2h3.2l-9.3 10.6h-2.9zM1055 145.2h3.2l4 6.3-2.6 1z" fill="#76767c"/>
<path d="M1064 152.4l4.1 4.5h-3v4.2h-2.2v-4.2h-3z" fill="#76767c"/>
<path d="M1060.6 171.2h3.2l-9.3 10.6h-2.9zM1055 171.2h3.2l4 6.3-2.6 1z" fill="#76767c"/>
<path d="M1063.6 172.4l3.8 4M1067.4 172.4l-3.8 4" stroke="#76767c" stroke-width="1.1"/>
<path d="M1064 178.4l4.1 4.5h-3v4.2h-2.2v-4.2h-3z" fill="#76767c"/>

<g fill="#333"><rect x="59" y="339" width="2" height="2"/><rect x="59" y="342" width="2" height="2"/><rect x="59" y="345" width="2" height="2"/><rect x="66" y="339" width="2" height="2"/><rect x="66" y="342" width="2" height="2"/><rect x="66" y="345" width="2" height="2"/></g>
<g fill="#666"><rect x="77" y="384" width="1.8" height="1.8"/><rect x="77" y="388" width="1.8" height="1.8"/><rect x="77" y="392" width="1.8" height="1.8"/></g>
<g fill="#666"><rect x="525" y="384" width="1.8" height="1.8"/><rect x="525" y="388" width="1.8" height="1.8"/><rect x="525" y="392" width="1.8" height="1.8"/></g>
<text x="90.2" y="392.7" font-size="12" fill="#1e1e1e" stroke="#1e1e1e" stroke-width="0.25" textLength="26" lengthAdjust="spacingAndGlyphs" >Filter</text>
<rect x="120.5" y="378.5" width="249" height="21" fill="#fff" stroke="#a8a8a8"/>
<text x="122.8" y="392.7" font-size="12" fill="#1e1e1e" stroke="#1e1e1e" stroke-width="0.25" textLength="63" lengthAdjust="spacingAndGlyphs" >Text: &quot;GHD&quot;</text>
<path d="M357 388.2h6l-3 3z" fill="#444"/>
<path d="M375.6 381h16.4l-6.2 7v7l-4 1.8v-8.8z" fill="#6d6d73"/>
<path d="M404 381h13l-4.8 5.5v7.5l-3.4 1.6v-9.1z" fill="#6d6d73"/>
<path d="M414.5 389.5l5.5 5.5M420 389.5l-5.5 5.5" stroke="#6d6d73" stroke-width="1.7"/>
<rect x="426" y="376" width="1" height="27" fill="#dadada"/>
<path d="M437.5 383.3l1-1.6h3.6l1 1.6h3.8v2h-12.4v-2z" fill="#6d6d73"/>
<path d="M435.5 386.4h9.8v7.6a1.2 1.2 0 0 1 -1.2 1.2h-7.4a1.2 1.2 0 0 1 -1.2 -1.2z" fill="#6d6d73"/>
<rect x="438.3" y="388.3" width="4" height="1.1" fill="#fff"/>
<text x="454.3" y="392.7" font-size="12" fill="#1e1e1e" stroke="#1e1e1e" stroke-width="0.25" textLength="59.5" lengthAdjust="spacingAndGlyphs" >Show Trash</text>
<text x="537.6" y="392.7" font-size="12" fill="#1e1e1e" stroke="#1e1e1e" stroke-width="0.25" textLength="25.5" lengthAdjust="spacingAndGlyphs" >View</text>
<rect x="567.5" y="378.5" width="44" height="21" fill="#fff" stroke="#a8a8a8"/>
<text x="569.8" y="392.7" font-size="12" fill="#1e1e1e" stroke="#1e1e1e" stroke-width="0.25" textLength="20" lengthAdjust="spacingAndGlyphs" >ALL</text>
<path d="M599 388.2h6l-3 3z" fill="#444"/>
<text x="616.8" y="392.7" font-size="12" fill="#1e1e1e" stroke="#1e1e1e" stroke-width="0.25" textLength="46.5" lengthAdjust="spacingAndGlyphs" >per page</text>
<path d="M673 389h10M677 384.5l-4.5 4.5 4.5 4.5" fill="none" stroke="#c8c8c8" stroke-width="1.8"/>
<g fill="#c8c8c8"><rect x="686" y="381.5" width="2" height="2"/><rect x="686" y="388" width="2" height="2"/><rect x="686" y="394.5" width="2" height="2"/></g>
<path d="M702 389h11M706.5 384.5l-4.5 4.5 4.5 4.5" fill="none" stroke="#c8c8c8" stroke-width="1.8"/>
<rect x="722.5" y="378.5" width="34" height="21" fill="#fff" stroke="#a8a8a8"/>
<text x="726" y="392.7" font-size="12" fill="#888" stroke="#888" stroke-width="0.25" >1</text>
<path d="M766 389h11M772.5 384.5l4.5 4.5-4.5 4.5" fill="none" stroke="#c8c8c8" stroke-width="1.8"/>
<g fill="#c8c8c8"><rect x="791" y="381.5" width="2" height="2"/><rect x="791" y="388" width="2" height="2"/><rect x="791" y="394.5" width="2" height="2"/></g>
<path d="M795 389h11M802 384.5l4.5 4.5-4.5 4.5" fill="none" stroke="#c8c8c8" stroke-width="1.8"/>
<text x="818" y="392.7" font-size="12" fill="#1e1e1e" stroke="#1e1e1e" stroke-width="0.25" textLength="53.5" lengthAdjust="spacingAndGlyphs" >of 1 pages</text>
<rect x="875" y="375" width="1" height="28" fill="#dadada"/>
<text x="881" y="392.7" font-size="12" fill="#1e1e1e" stroke="#1e1e1e" stroke-width="0.25" textLength="130" lengthAdjust="spacingAndGlyphs" >Total 5 records are found</text>
<rect x="70" y="408" width="16" height="1" fill="#dcdcdc"/>
<rect x="518" y="408" width="16" height="1" fill="#dcdcdc"/>
<g fill="#333"><rect x="696" y="410.5" width="1.6" height="1.6"/><rect x="699.5" y="410.5" width="1.6" height="1.6"/><rect x="703" y="410.5" width="1.6" height="1.6"/></g>
<rect x="70" y="416" width="195" height="268" fill="#a3a3a3" />
<rect x="71" y="417" width="193" height="267" fill="#fff" />
<rect x="71" y="446" width="193" height="29" fill="#e9e9ef" />
<rect x="71" y="446" width="5" height="29" fill="#4a4856" />
<text x="108" y="435.8" font-size="11" fill="#1e1e1e" stroke="#1e1e1e" stroke-width="0.25" textLength="39.5" lengthAdjust="spacingAndGlyphs" >Content</text>
<text x="108" y="464.8" font-size="11" fill="#1e1e1e" stroke="#1e1e1e" stroke-width="0.25" textLength="38.5" lengthAdjust="spacingAndGlyphs" >General</text>
<text x="108" y="493.8" font-size="11" fill="#1e1e1e" stroke="#1e1e1e" stroke-width="0.25" textLength="45.5" lengthAdjust="spacingAndGlyphs" >Inventory</text>
<text x="108" y="522.8" font-size="11" fill="#1e1e1e" stroke="#1e1e1e" stroke-width="0.25" textLength="40" lengthAdjust="spacingAndGlyphs" >Shipping</text>
<text x="108" y="551.8" font-size="11" fill="#1e1e1e" stroke="#1e1e1e" stroke-width="0.25" textLength="75.5" lengthAdjust="spacingAndGlyphs" >Linked Products</text>
<text x="108" y="580.8" font-size="11" fill="#1e1e1e" stroke="#1e1e1e" stroke-width="0.25" textLength="48.5" lengthAdjust="spacingAndGlyphs" >Attributes</text>
<text x="108" y="609.8" font-size="11" fill="#1e1e1e" stroke="#1e1e1e" stroke-width="0.25" textLength="48.5" lengthAdjust="spacingAndGlyphs" >Advanced</text>
<text x="108" y="638.8" font-size="11" fill="#1e1e1e" stroke="#1e1e1e" stroke-width="0.25" textLength="52" lengthAdjust="spacingAndGlyphs" >Categories</text>
<text x="108" y="667.8" font-size="11" fill="#1e1e1e" stroke="#1e1e1e" stroke-width="0.25" textLength="63.5" lengthAdjust="spacingAndGlyphs" >Product Tags</text>

<rect x="85.8" y="424.8" width="14.6" height="12.2" fill="none" stroke="#3c3c44" stroke-width="1.6"/>
<rect x="88" y="427.8" width="1.8" height="1.6" fill="#3c3c44"/><rect x="88" y="432.1" width="1.8" height="1.6" fill="#3c3c44"/>
<rect x="92.2" y="427.8" width="5.6" height="1.6" fill="#3c3c44"/><rect x="92.2" y="432.1" width="5.6" height="1.6" fill="#3c3c44"/>
<circle cx="93" cy="460" r="7.1" fill="none" stroke="#3c3c44" stroke-width="1.6"/>
<rect x="92.1" y="459" width="1.8" height="4.6" fill="#3c3c44"/><rect x="92.1" y="456" width="1.8" height="1.7" fill="#3c3c44"/>
<path d="M88.1 482.2h9.8l3.1 3.5v1.9h-1.2v8.2h-1.8v-8.2h-10.2v8.2h-1.8v-8.2h-1.2v-1.9z" fill="#3c3c44"/>
<rect x="89.1" y="489.1" width="2.7" height="2.5" fill="#3c3c44"/><rect x="89.1" y="493.1" width="2.7" height="2.7" fill="#3c3c44"/><rect x="94.2" y="493.1" width="2.6" height="2.7" fill="#3c3c44"/>
<rect x="86.2" y="511.1" width="8.6" height="8.7" fill="#3c3c44"/>
<path d="M88 515.5h3M88 517.4h2" stroke="#fff" stroke-width="1"/>
<path d="M97.1 510.2h3.5v15.4h-15.6v-3.6h12.1z" fill="#3c3c44"/>
<g fill="#fff"><rect x="99.3" y="512.2" width="1.4" height="1"/><rect x="99.3" y="515" width="1.4" height="1"/><rect x="99.3" y="517.8" width="1.4" height="1"/><rect x="99.3" y="520.6" width="1.4" height="1"/>
<rect x="86.8" y="524.4" width="1" height="1.3"/><rect x="89.6" y="524.4" width="1" height="1.3"/><rect x="92.4" y="524.4" width="1" height="1.3"/><rect x="95.2" y="524.4" width="1" height="1.3"/></g>
<path d="M88.7 553h-2.1a0.6 0.6 0 0 1 -0.6 -0.6v-11a0.6 0.6 0 0 1 0.6 -0.6h11.2a0.6 0.6 0 0 1 0.6 0.6v5.2" fill="none" stroke="#3c3c44" stroke-width="1.5"/>
<rect x="90" y="541.6" width="3.8" height="2" fill="#3c3c44"/>
<path d="M94 549.9h-2.2v4h2.2M97.2 549.9h2.7v4h-2.7M93.6 551.9h4" fill="none" stroke="#3c3c44" stroke-width="1.4"/>
<path d="M85.7 577.9l8.5-8.7h5.5v5.5l-8.7 8.6z" fill="#3c3c44" stroke="#3c3c44" stroke-width="0.8" stroke-linejoin="round"/>
<circle cx="95.8" cy="572.9" r="1.5" fill="#fff"/>
<path d="M93.1 597.5v14.6" stroke="#3c3c44" stroke-width="3.6" stroke-linecap="round"/>
<path d="M86.3 600.9l13.6 7.8M86.3 608.7l13.6-7.8" stroke="#3c3c44" stroke-width="2.8"/>
<path d="M85 627.5a1 1 0 0 1 1 -1h4.6l1.6 2h8a1 1 0 0 1 1 1v10.5a1 1 0 0 1 -1 1h-14.2a1 1 0 0 1 -1 -1z" fill="#3c3c44"/>
<rect x="85.9" y="659.9" width="14" height="9.2" rx="1" fill="none" stroke="#3c3c44" stroke-width="1.6"/>
<rect x="89.6" y="663.4" width="6.8" height="2.2" rx="1.1" fill="none" stroke="#3c3c44" stroke-width="1.3"/>
<path d="M89.4 659.2l3.5-4.2 3.5 4.2z" fill="#3c3c44"/>

<rect x="271.5" y="421.5" width="199" height="19" fill="#fff" stroke="#a8a8a8"/>
<path d="M278 425.5a1 1 0 0 1 1-1h6.5l3.8 3.8v8.6a1 1 0 0 1-1 1h-9.3a1 1 0 0 1-1-1z" fill="none" stroke="#3c3c44" stroke-width="1.5"/>
<path d="M280.6 430.2h3.6M280.6 432.6h6M280.6 435h6" stroke="#3c3c44" stroke-width="1.2"/>
<text x="295.8" y="435.1" font-size="11" fill="#1e1e1e" stroke="#1e1e1e" stroke-width="0.25" textLength="77" lengthAdjust="spacingAndGlyphs" >Simple Product</text>
<path d="M457 429.5h6l-3 3z" fill="#444"/>
<rect x="481.5" y="423.5" width="15" height="15" fill="#fff" stroke="#a8a8a8"/>
<text x="501.8" y="435.1" font-size="11" fill="#1e1e1e" stroke="#1e1e1e" stroke-width="0.25" textLength="34" lengthAdjust="spacingAndGlyphs" >Virtual</text>
<rect x="538.5" y="423.5" width="15" height="15" fill="#fff" stroke="#a8a8a8"/>
<text x="559.2" y="435.1" font-size="11" fill="#1e1e1e" stroke="#1e1e1e" stroke-width="0.25" textLength="75.5" lengthAdjust="spacingAndGlyphs" >Downloadable</text>
<rect x="637.5" y="423.5" width="15" height="15" fill="#fff" stroke="#a8a8a8"/>
<text x="658.2" y="435.1" font-size="11" fill="#1e1e1e" stroke="#1e1e1e" stroke-width="0.25" textLength="45.5" lengthAdjust="spacingAndGlyphs" >Featured</text>
<rect x="271" y="447" width="1059" height="237" fill="#a3a3a3" />
<rect x="272" y="448" width="1057" height="236" fill="#fff" />
<rect x="272" y="448" width="150" height="236" fill="#f0f0f0" />
<rect x="272" y="538" width="1051" height="30" fill="#efefef" />
<rect x="422" y="659" width="901" height="25" fill="#ebebeb" />
<rect x="272" y="478" width="1051" height="1" fill="#dcdcdc"/>
<rect x="272" y="508" width="1051" height="1" fill="#dcdcdc"/>
<rect x="272" y="538" width="1051" height="1" fill="#dcdcdc"/>
<rect x="286" y="568" width="1037" height="1" fill="#dcdcdc"/>
<rect x="286" y="598" width="1037" height="1" fill="#dcdcdc"/>
<rect x="272" y="628" width="1051" height="1" fill="#dcdcdc"/>
<rect x="272" y="658" width="1051" height="1" fill="#dcdcdc"/>
<text x="289" y="468" font-size="11" font-weight="700" fill="#1e1e1e" textLength="20.5" lengthAdjust="spacingAndGlyphs" >SKU</text>
<text x="289" y="498" font-size="11" font-weight="700" fill="#1e1e1e" textLength="68" lengthAdjust="spacingAndGlyphs" >Regular Price</text>
<text x="289" y="528" font-size="11" font-weight="700" fill="#1e1e1e" textLength="50.5" lengthAdjust="spacingAndGlyphs" >Sale Price</text>
<text x="289" y="558" font-size="11" font-weight="700" fill="#1e1e1e" textLength="84" lengthAdjust="spacingAndGlyphs" >Sale Price Dates</text>
<text x="302.5" y="588" font-size="11" font-weight="700" fill="#1e1e1e" textLength="79" lengthAdjust="spacingAndGlyphs" >Sale Price From</text>
<text x="302.5" y="618" font-size="11" font-weight="700" fill="#1e1e1e" textLength="65" lengthAdjust="spacingAndGlyphs" >Sale Price To</text>
<text x="289" y="648" font-size="11" font-weight="700" fill="#1e1e1e" textLength="84" lengthAdjust="spacingAndGlyphs" >Catalog Visibility</text>
<text x="289" y="678" font-size="11" font-weight="700" fill="#1e1e1e" textLength="49" lengthAdjust="spacingAndGlyphs" >Post Date</text>
<text x="424.5" y="468" font-size="11" fill="#1e1e1e" stroke="#1e1e1e" stroke-width="0.25" textLength="82.5" lengthAdjust="spacingAndGlyphs" >755456346VEND</text>
<text x="424.5" y="498" font-size="11" fill="#1e1e1e" stroke="#1e1e1e" stroke-width="0.25" >18.00</text>
<text x="424.5" y="528" font-size="11" fill="#1e1e1e" stroke="#1e1e1e" stroke-width="0.25" >11.70</text>
<text x="424.5" y="648" font-size="11" fill="#1e1e1e" stroke="#1e1e1e" stroke-width="0.25" textLength="123" lengthAdjust="spacingAndGlyphs" >Shop and search results</text>
<text x="424.5" y="678" font-size="11" fill="#1e1e1e" stroke="#1e1e1e" stroke-width="0.25" textLength="101.5" lengthAdjust="spacingAndGlyphs" >8/9/2021 9:19:52 PM</text>
<path d="M1309.5 492.6h7l-3.5 3.5z" fill="#555"/>
<path d="M1309.5 522.6h7l-3.5 3.5z" fill="#555"/>
<path d="M1309.5 582.6h7l-3.5 3.5z" fill="#555"/>
<path d="M1309.5 612.6h7l-3.5 3.5z" fill="#555"/>
<path d="M1309.5 642.6h7l-3.5 3.5z" fill="#555"/>
<path d="M275.3 551.2l3.4 3.4 3.4-3.4" fill="none" stroke="#222" stroke-width="1.7"/>
<rect x="1325" y="463.5" width="2.2" height="158.5" fill="#707070" /></svg>
</body></html>
